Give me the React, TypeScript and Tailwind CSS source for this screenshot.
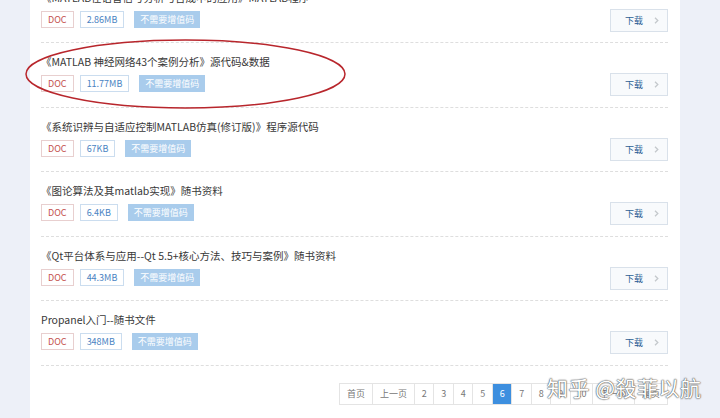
import React from "react";

const rows = [
  { title: "《MATLAB在语音信号分析与合成中的应用》MATLAB程序", size: "2.86MB" },
  { title: "《MATLAB 神经网络43个案例分析》源代码&数据", size: "11.77MB" },
  { title: "《系统识辨与自适应控制MATLAB仿真(修订版)》程序源代码", size: "67KB" },
  { title: "《图论算法及其matlab实现》随书资料", size: "6.4KB" },
  { title: "《Qt平台体系与应用--Qt 5.5+核心方法、技巧与案例》随书资料", size: "44.3MB" },
  { title: "Propanel入门--随书文件", size: "348MB" },
];

const pages = ["首页", "上一页", "2", "3", "4", "5", "6", "7", "8", "9", "10", "下一页", "尾页"];

function Row({ title, size }: { title: string; size: string }) {
  return (
    <div className="flex h-[64.5px] shrink-0 border-b border-dashed border-[#dedede]">
      <div className="flex-1 pt-[11px]">
        <div className="text-[10.5px] leading-[16px] text-[#383838] whitespace-nowrap">{title}</div>
        <div className="mt-[5px] flex">
          <span className="h-[17px] border border-[#e8cfcf] px-[6px] text-[9px] leading-[15px] text-[#c4504c]">DOC</span>
          <span className="ml-[6px] h-[17px] border border-[#cbddef] px-[6px] text-[9px] leading-[15px] text-[#4a83c2]">{size}</span>
          <span className="ml-[10px] h-[17px] bg-[#a9ccec] px-[6px] text-[9px] leading-[17px] text-white">不需要增值码</span>
        </div>
      </div>
      <div className="mt-[30px] flex h-[23px] w-[58px] items-center border border-[#d9e1ea] bg-[#f8fafc] pl-[14px]">
        <span className="text-[9px] leading-none text-[#2f5f94]">下载</span>
        <svg className="ml-[11px]" width="5" height="7" viewBox="0 0 5 7">
          <path d="M1 0.8 L3.8 3.5 L1 6.2" fill="none" stroke="#c4c8cc" strokeWidth="1.3" />
        </svg>
      </div>
    </div>
  );
}

export default function App() {
  return (
    <div className="relative h-[418px] w-[720px] overflow-hidden bg-[#edf0f8] font-['Noto_Sans_CJK_SC','Noto_Sans',sans-serif]">
      <div className="ml-[30px] flex h-full w-[650px] flex-col bg-white pl-[11px] pr-[12px]">
        <div className="-mt-[21.5px] flex flex-col">
          {rows.map((r) => (
            <Row key={r.title} title={r.title} size={r.size} />
          ))}
        </div>
        <div className="mt-[17.5px] flex justify-end">
          <div className="flex h-[22px] border border-[#e4e4e4]">
            {pages.map((p, i) => {
              const isNum = /^\d+$/.test(p);
              const active = p === "6";
              return (
                <span
                  key={p}
                  className={
                    (i === 0 ? "" : "border-l border-[#e4e4e4] ") +
                    (isNum ? (p === "10" ? "w-[22px] " : "w-[19.5px] ") : "px-[7px] ") +
                    (active ? "bg-[#3d8fdf] text-white " : "text-[#777] ") +
                    "text-center text-[9px] leading-[20px]"
                  }
                >
                  {p}
                </span>
              );
            })}
          </div>
        </div>
      </div>
      <svg className="pointer-events-none absolute left-0 top-0" width="720" height="418">
        <ellipse cx="185.5" cy="74" rx="159.5" ry="34" fill="none" stroke="#b8262c" strokeWidth="1.5" />
      </svg>
      <div className="pointer-events-none absolute left-[547px] top-[374px] whitespace-nowrap text-[21px] leading-[26px] tracking-[0.5px] text-white [text-shadow:0_0_1px_#555,0_0_1px_#555,0_0_2px_#888]">
        知乎 @殺菲以航
      </div>
    </div>
  );
}
